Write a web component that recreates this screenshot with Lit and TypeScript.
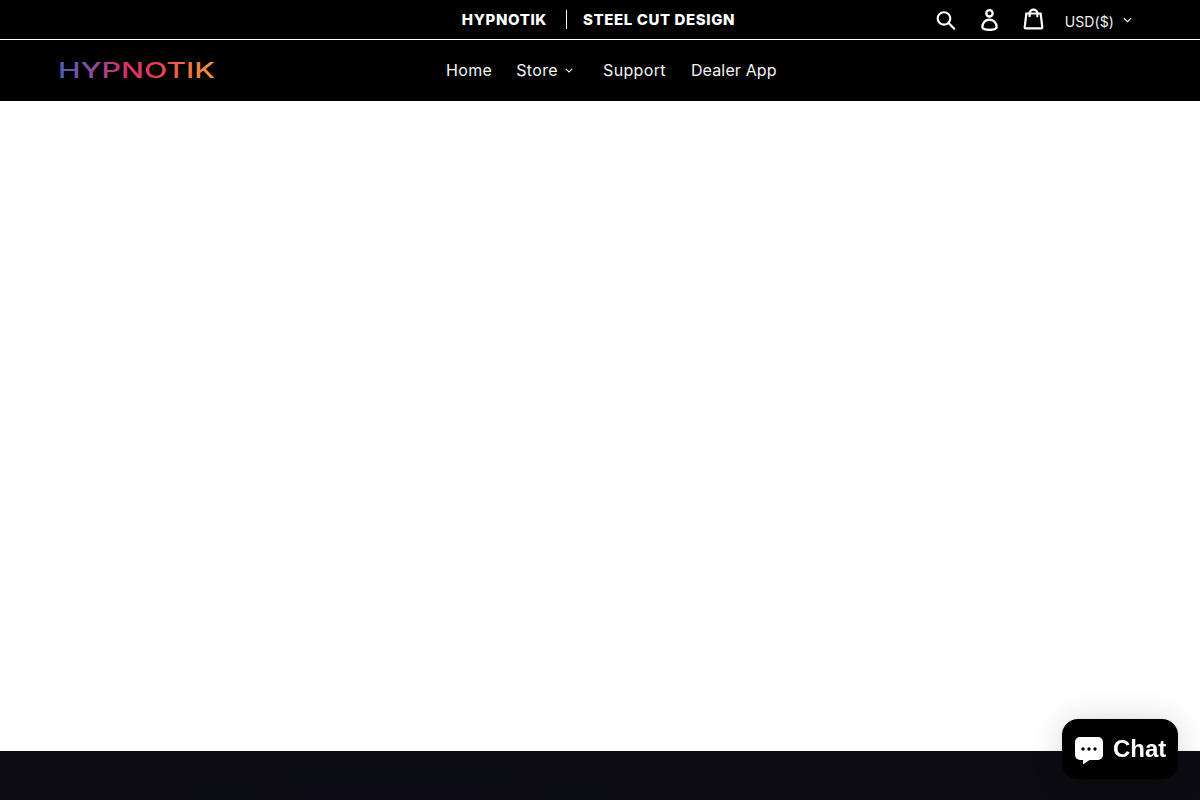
import { LitElement, html, css } from "lit";
import { customElement } from "lit/decorators.js";

@customElement("app-root")
export class AppRoot extends LitElement {
  static styles = css`
    :host {
      display: flex;
      flex-direction: column;
      height: 800px;
      overflow: hidden;
      background: #fff;
      font-family: Inter, "Open Sans", "Liberation Sans", sans-serif;
      color: #fff;
    }
    .top {
      height: 39px;
      background: #000;
      border-bottom: 1px solid #fff;
      display: grid;
      grid-template-columns: 1fr auto 1fr;
      align-items: center;
      flex: none;
    }
    .brand {
      display: flex;
      align-items: center;
      font-size: 15px;
      font-weight: 800;
      letter-spacing: 0.6px;
      margin-left: -3px;
    }
    .brand .a {
      padding-right: 19px;
      border-right: 1px solid #fff;
      line-height: 19px;
    }
    .brand .b {
      padding-left: 16px;
      line-height: 19px;
    }
    .tools {
      display: flex;
      align-items: center;
      justify-content: flex-end;
      padding-right: 68px;
    }
    .tools svg.ic {
      display: block;
      fill: #fff;
      flex: none;
    }
    .search { width: 20px; height: 21px; margin-right: 24px; }
    .login { width: 19px; height: 22px; margin-right: 24px; }
    .cart { width: 21px; height: 22px; margin-right: 21px; margin-top: -1px; }
    .currency {
      font-size: 14px;
      color: #f0f0f0;
      margin-top: 3px;
      letter-spacing: 0.1px;
      margin-right: 9px;
    }
    .chev {
      display: block;
      fill: none;
      stroke: #fff;
      stroke-width: 1.1;
      flex: none;
    }
    .nav {
      height: 61px;
      background: #000;
      display: flex;
      align-items: center;
      flex: none;
      padding-left: 59px;
    }
    .logo { display: block; width: 157px; height: 24px; flex: none; }
    .links {
      display: flex;
      align-items: center;
      margin-left: 230px;
      padding-bottom: 2px;
      font-size: 16px;
      letter-spacing: 0.35px;
      color: #f5f5f5;
    }
    .home { margin-right: 24px; }
    .store { display: flex; align-items: center; margin-right: 24px; }
    .store .chev { margin-left: 7px; margin-right: 6px; margin-top: 1px; }
    .support { margin-right: 25px; }
    .dealer { letter-spacing: 0.15px; }
    .main { flex: 1; background: #fff; }
    .footer {
      height: 49px;
      flex: none;
      background: #0b0b11;
      background-image: radial-gradient(ellipse 300px 60px at 400px 70px, #0c0b18, #0b0b11);
    }
    .chat {
      position: fixed;
      left: 1062px;
      top: 719px;
      width: 116px;
      height: 60px;
      border-radius: 16px;
      background: #000;
      box-shadow: 0 1px 6px rgba(0, 0, 0, 0.06), 0 2px 32px rgba(0, 0, 0, 0.16);
      display: flex;
      align-items: center;
      padding-left: 12px;
      box-sizing: border-box;
      gap: 9px;
      font-family: "Liberation Sans", Arial, sans-serif;
      font-weight: 700;
      font-size: 24px;
      color: #fff;
    }
    .chat svg { display: block; flex: none; margin-top: 1px; }
  `;

  private chev(w: number, h: number) {
    return html`<svg class="chev" width=${w} height=${h} viewBox="0 0 8 5" aria-hidden="true"><path d="M.8.8 4 4l3.2-3.2"/></svg>`;
  }

  render() {
    return html`
      <div class="top">
        <div></div>
        <div class="brand"><span class="a">HYPNOTIK</span><span class="b">STEEL CUT DESIGN</span></div>
        <div class="tools">
          <svg class="ic search" viewBox="0 0 37 40" aria-label="Search"><path d="M35.6 36l-9.8-9.8c4.1-5.4 3.6-13.2-1.3-18.1-5.4-5.4-14.2-5.4-19.7 0-5.4 5.4-5.4 14.2 0 19.7 2.6 2.6 6.1 4.1 9.8 4.1 3 0 5.9-1 8.3-2.8l9.8 9.8c.4.4.9.6 1.4.6s1-.2 1.4-.6c.9-.9.9-2.1.1-2.9zm-20.9-8.2c-2.6 0-5.1-1-7-2.9-3.9-3.9-3.9-10.1 0-14C9.6 9 12.2 8 14.7 8s5.1 1 7 2.9c3.9 3.9 3.9 10.1 0 14-1.9 1.9-4.4 2.9-7 2.9z"/></svg>
          <svg class="ic login" viewBox="0 0 28.33 37.68" aria-label="Log in"><path d="M14.17 14.9a7.45 7.45 0 1 0-7.5-7.45 7.46 7.46 0 0 0 7.5 7.45zm0-10.91a3.45 3.45 0 1 1-3.5 3.46A3.46 3.46 0 0 1 14.17 4zM14.17 16.47A14.18 14.18 0 0 0 0 30.68c0 1.41.66 4 5.11 5.66a27.17 27.17 0 0 0 9.06 1.34c6.54 0 14.17-1.84 14.17-7a14.18 14.18 0 0 0-14.17-14.21zm0 17.21c-6.3 0-10.17-1.77-10.17-3a10.17 10.17 0 1 1 20.33 0c.01 1.23-3.86 3-10.16 3z"/></svg>
          <svg class="ic cart" viewBox="0 0 37 40" aria-label="Cart"><path d="M36.5 34.8L33.3 8h-5.9C26.7 3.9 23 .8 18.5.8S10.3 3.9 9.6 8H3.7L.5 34.8c-.2 1.5.4 2.4.9 3 .5.5 1.4 1.2 3.1 1.2h28c1.3 0 2.4-.4 3.1-1.3.7-.7 1-1.8.9-2.9zm-18-30c2.2 0 4.1 1.4 4.7 3.2h-9.5c.7-1.9 2.6-3.2 4.8-3.2zM4.5 35l2.8-23h2.2v3c0 1.1.9 2 2 2s2-.9 2-2v-3h10v3c0 1.1.9 2 2 2s2-.9 2-2v-3h2.2l2.8 23h-28z"/></svg>
          <span class="currency">USD($)</span>
          ${this.chev(9, 6)}
        </div>
      </div>
      <div class="nav">
        <svg class="logo" viewBox="0 0 157 24" role="img" aria-label="Hypnotik">
          <defs>
            <linearGradient id="lg" x1="0" x2="1" y1="0" y2="0">
              <stop offset="0" stop-color="#4760b0"/>
              <stop offset="0.22" stop-color="#8d4c9c"/>
              <stop offset="0.42" stop-color="#d92f72"/>
              <stop offset="0.62" stop-color="#e63a5a"/>
              <stop offset="0.8" stop-color="#ee6a3f"/>
              <stop offset="1" stop-color="#f09a3a"/>
            </linearGradient>
          </defs>
          <text x="-1" y="19" textLength="157" lengthAdjust="spacingAndGlyphs" fill="url(#lg)" font-family="Inter, sans-serif" font-weight="500" font-size="21">HYPNOTIK</text>
        </svg>
        <div class="links">
          <span class="home">Home</span>
          <span class="store">Store${this.chev(8, 5)}</span>
          <span class="support">Support</span>
          <span class="dealer">Dealer App</span>
        </div>
      </div>
      <div class="main"></div>
      <div class="footer"></div>
      <div class="chat">
        <svg width="30" height="30" viewBox="0 0 30 30" aria-hidden="true">
          <path fill="#fff" d="M6 2h18a5 5 0 0 1 5 5v13a5 5 0 0 1-5 5h-8.5l-6.5 4.5v-4.5H6a5 5 0 0 1-5-5V7a5 5 0 0 1 5-5z"/>
          <circle cx="9" cy="14" r="1.7" fill="#000"/><circle cx="15" cy="14" r="1.7" fill="#000"/><circle cx="21" cy="14" r="1.7" fill="#000"/>
        </svg>
        <span>Chat</span>
      </div>
    `;
  }
}
